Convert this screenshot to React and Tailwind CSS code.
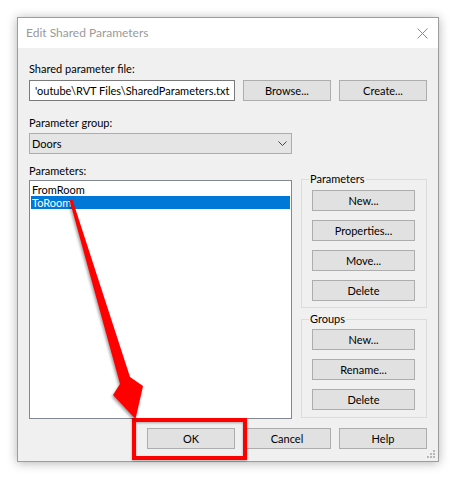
import React from 'react';

function WinButton({ children, className = '' }) {
  return (
    <button
      type="button"
      className={`h-[21px] border border-[#adadad] bg-[#e1e1e1] text-[11px] leading-[19px] text-black ${className}`}
    >
      {children}
    </button>
  );
}

function GroupBox({ title, children, className = '' }) {
  return (
    <div className={`relative flex flex-col gap-[9px] border border-[#dcdcdc] pl-[10px] ${className}`}>
      <span className="absolute -top-[9px] left-[7px] bg-[#f0f0f0] px-[1px] text-[11px] leading-[16px] text-black">
        {title}
      </span>
      {children}
    </div>
  );
}

function SizeGrip() {
  return (
    <svg width="10" height="10" viewBox="0 0 10 10" className="absolute bottom-[2px] right-[2px]">
      <g fill="#b8b8b8">
        <rect x="7" y="1" width="2" height="2" />
        <rect x="4" y="4" width="2" height="2" />
        <rect x="7" y="4" width="2" height="2" />
        <rect x="1" y="7" width="2" height="2" />
        <rect x="4" y="7" width="2" height="2" />
        <rect x="7" y="7" width="2" height="2" />
      </g>
    </svg>
  );
}

export default function App() {
  return (
    <div className="relative h-[482px] w-[457px] overflow-hidden bg-white font-['Lato',sans-serif] text-[11px] text-black">
      <div className="ml-[17px] mt-[17px] w-[422px]">
        <div className="relative border border-[#9c9c9c] bg-[#f0f0f0] shadow-[0_1px_10px_rgba(0,0,0,0.3)]">
          {/* title bar */}
          <div className="flex h-[30px] items-center justify-between bg-white pl-[8px] pr-[10px]">
            <span className="text-[12px] text-[#9a9a9a]">Edit Shared Parameters</span>
            <svg width="11" height="11" viewBox="0 0 11 11">
              <path d="M0.5 0.5 L10.5 10.5 M10.5 0.5 L0.5 10.5" stroke="#8a8a8a" strokeWidth="1" />
            </svg>
          </div>

          {/* body */}
          <div className="flex flex-col pb-[12px] pl-[11px] pr-[11px] pt-[13px]">
            <div className="h-[16px] leading-[16px]">Shared parameter file:</div>
            <div className="mt-[3px] flex gap-[8px]">
              <div className="h-[21px] w-[206px] overflow-hidden whitespace-nowrap border border-[#7a7a7a] bg-white pl-[5px] leading-[19px]">
                'outube\RVT Files\SharedParameters.txt
              </div>
              <WinButton className="w-[88px]">Browse...</WinButton>
              <WinButton className="w-[88px]">Create...</WinButton>
            </div>

            <div className="mt-[14px] h-[16px] leading-[16px]">Parameter group:</div>
            <div className="mt-[2px] flex h-[21px] w-[263px] items-center justify-between border border-[#adadad] bg-[#e5e5e5] pl-[2px] pr-[4px]">
              <span className="leading-[19px]">Doors</span>
              <svg width="9" height="5" viewBox="0 0 9 5">
                <path d="M0.5 0.5 L4.5 4.5 L8.5 0.5" fill="none" stroke="#444" strokeWidth="1" />
              </svg>
            </div>

            <div className="mt-[9px] h-[16px] leading-[16px]">Parameters:</div>
            <div className="flex gap-[9px]">
              <div className="mt-[1px] flex h-[239px] w-[263px] flex-col border border-[#828790] bg-white px-[1px] pt-[2px]">
                <div className="h-[13px] pl-[1px] leading-[13px]">FromRoom</div>
                <div className="h-[13px] bg-[#0078d7] pl-[1px] leading-[13px] text-white">ToRoom</div>
              </div>

              <div className="flex w-[126px] flex-col gap-[11px]">
                <GroupBox title="Parameters" className="pb-[6px] pt-[10px]">
                  <WinButton className="w-[103px]">New...</WinButton>
                  <WinButton className="w-[103px]">Properties...</WinButton>
                  <WinButton className="w-[103px]">Move...</WinButton>
                  <WinButton className="w-[103px]">Delete</WinButton>
                </GroupBox>
                <GroupBox title="Groups" className="pb-[7px] pt-[9px]">
                  <WinButton className="w-[103px]">New...</WinButton>
                  <WinButton className="w-[103px]">Rename...</WinButton>
                  <WinButton className="w-[103px]">Delete</WinButton>
                </GroupBox>
              </div>
            </div>

            <div className="mt-[9px] flex justify-end gap-[8px]">
              <WinButton className="w-[88px]">OK</WinButton>
              <WinButton className="w-[88px]">Cancel</WinButton>
              <WinButton className="w-[88px]">Help</WinButton>
            </div>
          </div>
          <SizeGrip />
        </div>
      </div>

      {/* annotation: highlight box around OK */}
      <div className="pointer-events-none absolute left-[132px] top-[418px] h-[42px] w-[115px] border-4 border-[#ff0000] drop-shadow-[0_1px_1px_rgba(0,0,0,0.3)]" />

      {/* annotation: arrow */}
      <svg
        width="457"
        height="482"
        viewBox="0 0 457 482"
        className="pointer-events-none absolute left-0 top-0 drop-shadow-[-1px_2px_1.5px_rgba(0,0,0,0.4)]"
      >
        <polygon
          points="69.5,200 72.5,200 130,377 143,386 135.5,419 113,395 120,384"
          fill="#ff0000"
        />
      </svg>
    </div>
  );
}
